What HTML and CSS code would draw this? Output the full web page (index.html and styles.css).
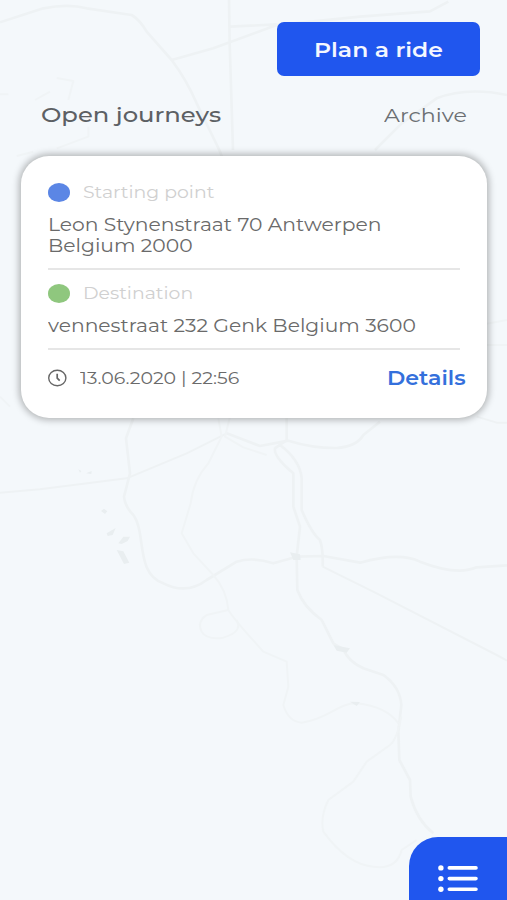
FILE: index.html
```html
<!DOCTYPE html>
<html lang="en">
<head>
<meta charset="utf-8">
<meta name="viewport" content="width=device-width, initial-scale=1">
<title>Open journeys</title>
<link rel="stylesheet" href="styles.css">
</head>
<body>
<div class="screen">
  <svg class="map" viewBox="0 0 1521 2700" aria-hidden="true">
    <g class="roads">
      <path d="M0 67 130 25Q205 10 260 25L395 45Q420 60 440 95L515 180Q560 240 590 310L658 450 700 560"/>
      <path d="M515 180 640 145 830 75 1080 50 1290 34 1345 5M690 80 830 73"/>
      <path d="M687 0 689 130 699 450M1125 450 1205 370 1310 295Q1400 260 1521 285"/>
      <path class="faint" d="M170 234 220 243 205 300M105 300 150 275M0 283H25M265 380V410L170 445M50 468 100 455"/>
      <path class="faint" d="M1440 975 1521 960M1440 1035H1521M0 1190 30 1220"/>
    </g>
    <g class="roads" transform="translate(0 1230)">
      <path d="M400 25 378 85 390 190 372 260Q375 290 400 315C440 370 405 490 490 520Q560 555 620 510L710 455Q760 440 820 460L890 440 970 438 1080 458Q1200 425 1260 455C1350 490 1400 485 1430 472L1521 466"/>
      <path class="thin" d="M0 248 120 238 380 205 560 130 680 70"/>
      <path d="M680 70 780 108 865 92Q940 115 1010 114 1070 110 1090 75L1140 35"/>
      <path d="M860 25V90L825 115Q820 140 880 190L880 290 900 350 890 440 892 540Q910 590 965 630L1000 700 1030 718Q1045 755 1090 775L1150 795Q1200 830 1204 885L1195 965 1198 1050 1230 1110 1232 1160Q1250 1230 1300 1270"/>
      <path d="M840 105Q900 150 905 205L905 300Q935 370 960 390 970 420 968 470"/>
      <path class="thin" d="M968 470 1130 550 1490 735 1521 752M1430 20 1490 38H1521"/>
      <path class="faint" d="M655 25 665 80 625 160Q580 210 572 280L545 370 580 430 640 495Q680 540 685 600C710 640 760 690 790 725L860 755 865 830 850 885Q865 935 905 938C990 925 1010 880 1070 880Q1160 890 1195 940M690 20 675 80 730 112 800 135"/>
      <path class="faint" d="M685 600 620 615Q590 635 605 665 620 690 670 683 730 665 710 630"/>
      <path class="faint" d="M1204 920Q1190 990 1170 1005L1100 1055 1060 1115 985 1170Q960 1220 970 1265C1010 1320 1060 1365 1120 1370Q1190 1380 1205 1320L1250 1290"/>
    </g>
    <g class="ponds" transform="translate(0 1230)">
      <path d="M303 303 312 296 322 304 315 312ZM320 370 347 354 338 375 323 378ZM355 400 370 380 390 380 383 393 365 402ZM350 420 370 424 388 458 372 462ZM870 427 900 433 902 450 880 450ZM1000 705 1050 715 1040 728 1010 722ZM1050 875 1080 876 1070 888ZM235 178 244 183 240 188ZM258 190 275 183 274 192Z"/>
    </g>
  </svg>

  <header class="topbar">
    <button class="plan"><span class="text plan-text">Plan a ride</span></button>
  </header>
  <nav class="tabs">
    <span class="text tab-open">Open journeys</span>
    <span class="text tab-archive">Archive</span>
  </nav>

  <article class="card">
    <section class="stop stop-start">
      <div class="label"><i class="dot blue"></i><span class="text label-text">Starting point</span></div>
      <p class="address"><span class="text">Leon Stynenstraat 70 Antwerpen</span><span class="text">Belgium 2000</span></p>
    </section>
    <section class="stop stop-end">
      <div class="label"><i class="dot green"></i><span class="text label-text">Destination</span></div>
      <p class="address"><span class="text">vennestraat 232 Genk Belgium 3600</span></p>
    </section>
    <footer class="meta">
      <svg class="clock" viewBox="0 0 20 18"><ellipse cx="9.3" cy="9" rx="8.6" ry="7.7"/><path class="hands" d="M9.2 4.8V9.2L11.7 11.7"/></svg>
      <span class="text date">13.06.2020 | 22:56</span>
      <span class="text details">Details</span>
    </footer>
  </article>

  <button class="menu" aria-label="Menu">
    <svg viewBox="0 0 40 28"><g class="bullets"><circle cx="2.9" cy="2.9" r="2.7"/><circle cx="2.9" cy="13.6" r="2.7"/><circle cx="2.9" cy="24.2" r="2.7"/></g><path d="M11.3 2.9H38M11.3 13.6H38M11.3 24.2H38"/></svg>
  </button>
</div>
</body>
</html>
```
FILE: styles.css
```css
* { box-sizing: border-box; }
body { margin: 0; font-family: Montserrat, Inter, sans-serif; color: #6a6a6a; }
button { border: 0; padding: 0; font: inherit; }
.screen { position: relative; width: 507px; height: 900px; overflow: hidden; background: #f4f8fb; display: flex; flex-direction: column; }
.map { position: absolute; inset: 0; width: 507px; height: 900px; }
.roads { fill: none; stroke: #eef2f4; stroke-width: 8; stroke-linejoin: round; }
.roads .thin { stroke-width: 6; }
.roads .faint { stroke: #f0f4f6; stroke-width: 6; }
.ponds { fill: #e9eef0; }
.text { display: block; white-space: nowrap; transform-origin: left center; transform: scaleX(1.127); }
.topbar { position: relative; display: flex; justify-content: flex-end; padding: 22px 27px 0 0; }
.plan { width: 203px; height: 54px; border-radius: 7px; background: #2056ee; color: #f4f7ff; padding: 2px 0 0 37px; text-align: left; }
.plan-text { font-size: 20.5px; font-weight: 600; line-height: 24px; transform: scaleX(1.147); }
.tabs { position: relative; display: grid; grid-template-columns: 343px 1fr; padding: 27px 0 0 41px; line-height: 24px; }
.tab-open { font-size: 21px; font-weight: 500; color: #5c6064; transform: scaleX(1.155); }
.tab-archive { font-size: 19.5px; color: #6b6f73; transform: scaleX(1.137); }
.card { position: relative; width: 466px; height: 262px; margin: 29px 0 0 21px; padding: 25px 27px 0; border-radius: 28px; background: #fff; box-shadow: 0 0 7px 2px rgba(0,0,0,.28); }
.stop { border-bottom: 2px solid #e6e6e6; }
.stop-start { height: 89px; }
.stop-end { height: 80px; padding-top: 12px; }
.label { display: flex; align-items: center; gap: 13px; height: 22px; font-size: 17px; color: #d0d0d0; }
.label-text { transform: scaleX(1.11); }
.dot { width: 22px; height: 19px; border-radius: 50%; }
.blue { background: #5b86e5; }
.green { background: #8fc77e; }
.address { margin: 12px 0 0; font-size: 18px; line-height: 21px; }
.meta { display: flex; align-items: center; height: 56px; }
.clock { width: 20px; height: 18px; margin-right: 12px; fill: none; stroke: #666; stroke-width: 1.4; }
.hands { stroke-width: 1.7; }
.date { width: 307px; flex: none; font-size: 17px; transform: scaleX(1.112); }
.details { font-size: 19.5px; font-weight: 600; color: #3470dc; transform: scaleX(1.135); }
.menu { position: absolute; right: 0; bottom: 0; display: flex; align-items: flex-start; width: 98px; height: 63px; border-radius: 29px 0 0 0; background: #2056ee; padding: 28px 0 0 29px; }
.menu svg { display: block; flex: none; width: 40px; height: 28px; fill: none; stroke: #fff; stroke-width: 3.6; stroke-linecap: round; }
.bullets { fill: #fff; stroke: none; }
```
